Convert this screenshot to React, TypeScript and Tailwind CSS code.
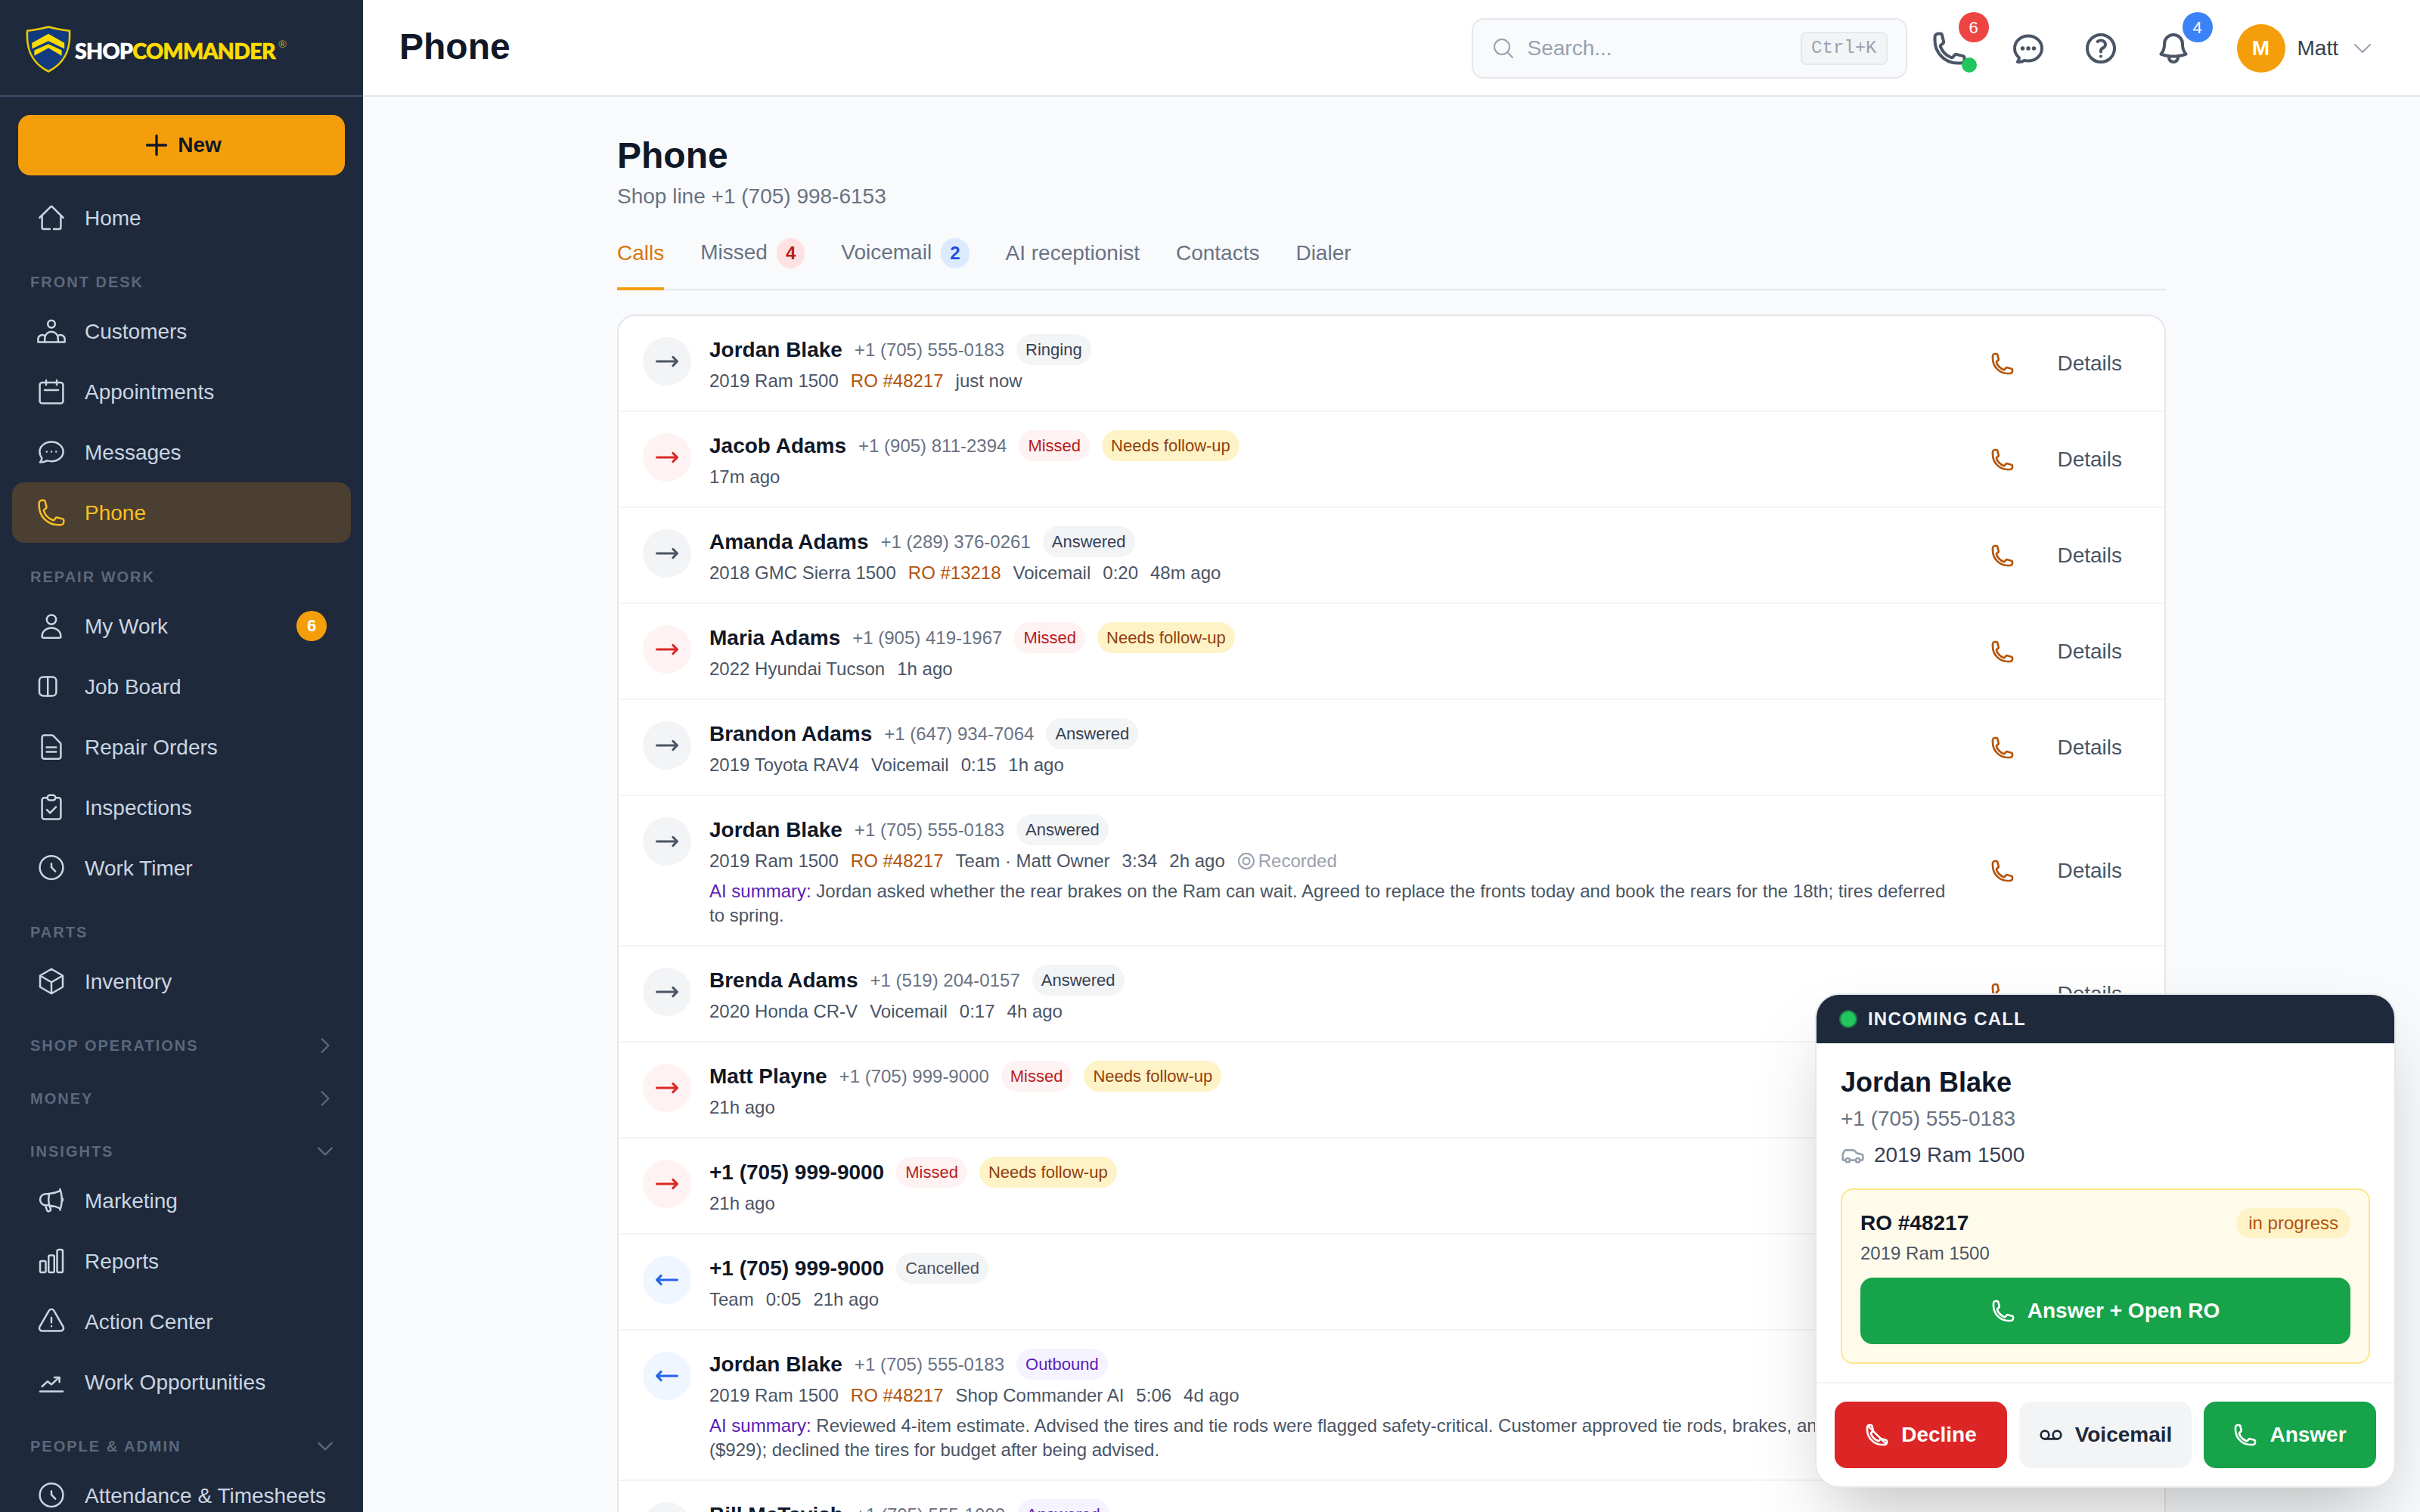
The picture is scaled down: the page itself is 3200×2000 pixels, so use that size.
import {
  HiOutlineArrowLongLeft,
  HiOutlineArrowLongRight,
  HiOutlineBell,
  HiOutlineChartBar,
  HiOutlineChatBubbleOvalLeftEllipsis,
  HiOutlineChevronDown,
  HiOutlineChevronRight,
  HiOutlineCube,
  HiOutlineExclamationTriangle,
  HiOutlineMagnifyingGlass,
  HiOutlineMegaphone,
  HiOutlinePhone,
  HiOutlinePlus,
  HiOutlineQuestionMarkCircle,
} from "react-icons/hi2";
import { Car, Voicemail } from "lucide-react";
import type { ComponentType, ReactNode } from "react";

interface IconProps {
  size?: number;
  className?: string;
}

type IconType = ComponentType<IconProps>;

function Stroke({ size = 20, className, children }: IconProps & { children: ReactNode }) {
  return (
    <svg width={size} height={size} viewBox="0 0 20 20" fill="none" stroke="currentColor" strokeWidth={1.25} strokeLinecap="round" strokeLinejoin="round" className={className}>
      {children}
    </svg>
  );
}

const HomeIcon = (p: IconProps) => (
  <Stroke {...p}>
    <path d="M2.2 10 9.3 2.9a1 1 0 0 1 1.4 0L17.8 10" />
    <path d="M3.8 8.5v8a1 1 0 0 0 1 1H9M11.5 17.5h3.7a1 1 0 0 0 1-1v-8" />
  </Stroke>
);

const CustomersIcon = (p: IconProps) => (
  <Stroke {...p}>
    <circle cx="10" cy="5.3" r="2.4" />
    <path d="M5.6 17.2v-2.4a4.4 4.4 0 0 1 8.8 0v2.4" />
    <path d="M5.7 13.1A2.8 2.8 0 0 0 1.2 15.4v1.8h17.6v-1.8a2.8 2.8 0 0 0-4.5-2.3" />
  </Stroke>
);

const CalendarIcon = (p: IconProps) => (
  <Stroke {...p}>
    <rect x="2.3" y="4" width="15.4" height="13.8" rx="1.6" />
    <path d="M6.5 2.5V5.5M13.5 2.5V5.5M5.5 9h9" />
  </Stroke>
);

const ChatIcon = (p: IconProps) => (
  <Stroke {...p}>
    <path d="M10 3.3c4.3 0 7.8 2.9 7.8 6.4s-3.5 6.4-7.8 6.4c-1 0-2-.2-2.9-.4-1 .6-2.6 1.1-4.6 1.1.7-.8 1.1-1.7 1.2-2.7C2.9 13 2.2 11.4 2.2 9.7c0-3.5 3.5-6.4 7.8-6.4Z" />
    <path d="M6.9 9.8h.01M10 9.8h.01M13.1 9.8h.01" />
  </Stroke>
);

const UserIcon = (p: IconProps) => (
  <Stroke {...p}>
    <circle cx="10" cy="5.8" r="3.1" />
    <path d="M3.8 16.9c0-3.3 2.8-5.7 6.2-5.7s6.2 2.4 6.2 5.7c0 .6-.4 1-1 1H4.8c-.6 0-1-.4-1-1Z" />
  </Stroke>
);

const BoardIcon = (p: IconProps) => (
  <Stroke {...p}>
    <rect x="2" y="3.7" width="11.2" height="12.5" rx="2.5" />
    <path d="M7.6 3.7v12.5" />
  </Stroke>
);

const DocIcon = (p: IconProps) => (
  <Stroke {...p}>
    <path d="M5.3 2.3h4.9c.4 0 .8.2 1.1.4l4.5 4.6c.3.3.4.7.4 1.1v8a1.5 1.5 0 0 1-1.5 1.5h-9.4a1.5 1.5 0 0 1-1.5-1.5V3.8a1.5 1.5 0 0 1 1.5-1.5Z" />
    <path d="M6.8 10.2h6.3M6.8 13.2h6.3" />
  </Stroke>
);

const ClipboardIcon = (p: IconProps) => (
  <Stroke {...p}>
    <path d="M7.3 3.6H5.3a1.5 1.5 0 0 0-1.5 1.5v11.2a1.5 1.5 0 0 0 1.5 1.5h9.4a1.5 1.5 0 0 0 1.5-1.5V5.1a1.5 1.5 0 0 0-1.5-1.5h-2" />
    <rect x="7.3" y="1.9" width="5.4" height="3.4" rx="1.7" />
    <path d="m7 11.6 2.1 2.1 3.9-4" />
  </Stroke>
);

const ClockIcon = (p: IconProps) => (
  <Stroke {...p}>
    <circle cx="10" cy="9.8" r="7.7" />
    <path d="M10 7.2V9.6L12.6 12.3" />
  </Stroke>
);

const TrendIcon = (p: IconProps) => (
  <Stroke {...p}>
    <path d="M2.5 16.2h15" />
    <path d="m3.8 13 3.7-3.4 2.5 2.1 5-4.6" />
    <path d="M12 7h3.3v3" />
  </Stroke>
);

function HangupIcon({ size = 16 }: IconProps) {
  return (
    <svg width={size} height={size} viewBox="0 0 24 24" fill="none" stroke="currentColor" strokeWidth={2} strokeLinecap="round" strokeLinejoin="round">
      <path d="M2.25 6.75c0 8.284 6.716 15 15 15h2.25a2.25 2.25 0 0 0 2.25-2.25v-1.372c0-.516-.351-.966-.852-1.091l-4.423-1.106c-.44-.11-.902.055-1.173.417l-.97 1.293c-.282.376-.769.542-1.21.38a12.035 12.035 0 0 1-7.143-7.143c-.162-.441.004-.928.38-1.21l1.293-.97c.363-.271.527-.734.417-1.173L6.963 3.102a1.125 1.125 0 0 0-1.091-.852H4.5A2.25 2.25 0 0 0 2.25 4.5v2.25Z" />
      <path d="M4 4l16 16" />
    </svg>
  );
}

function RecordIcon() {
  return (
    <svg width={12} height={12} viewBox="0 0 24 24" fill="none" stroke="currentColor" strokeWidth={2} className="text-gray-400">
      <circle cx="12" cy="12" r="10" />
      <circle cx="12" cy="12" r="4.5" />
    </svg>
  );
}

function Logo() {
  return (
    <div className="flex items-center gap-[2.5px] pt-[2px]">
      <svg width={30} height={31} viewBox="0 0 58 60">
        <path d="M29 1.5 C38 4 47 5.5 56 6.5 C57.5 28 52 47 29 58.5 C6 47 .5 28 2 6.5 C11 5.5 20 4 29 1.5Z" fill="#123a80" stroke="#e8c800" strokeWidth={2.6} />
        <path d="M8 22 L29 10.5 L49.5 22 V29.5 L29 19.5 L8 29.5Z" fill="#fbdc00" />
        <path d="M11 31.5 L29 23.5 L46 31.5 V38.5 L29 28.5 L11 38.5Z" fill="#fbdc00" />
      </svg>
      <div className="mt-[2px] flex items-start font-['Lato',sans-serif] text-[14.3px] leading-none font-black tracking-[-0.35px] [-webkit-text-stroke:0.35px_currentColor]">
        <span className="text-white">SHOP</span>
        <span className="text-[#fbdc00]">COMMANDER</span>
        <span className="-mt-[1px] ml-[2px] text-[7px] font-normal text-[#b9a52a] [-webkit-text-stroke:0]">®</span>
      </div>
    </div>
  );
}

function NavItem({ icon: Icon, label, active, badge }: { icon: IconType; label: string; active?: boolean; badge?: string }) {
  return (
    <div className={`mx-2 flex h-10 shrink-0 items-center gap-3 rounded-lg px-4 text-sm ${active ? "bg-[#4a3f30] text-[#fbbf24]" : "text-slate-300"}`}>
      <Icon size={20} className="shrink-0" />
      <span className="flex-1 pt-px">{label}</span>
      {badge && <span className="flex size-5 items-center justify-center rounded-full bg-[#f59e0b] text-[11px] font-bold text-white">{badge}</span>}
    </div>
  );
}

function SectionLabel({ label, chevron }: { label: string; chevron?: "right" | "down" }) {
  return (
    <div className="flex h-[35px] shrink-0 items-center justify-between pt-[10px] pr-[18px] pl-5 text-[10px] font-bold tracking-widest text-[#5b687c] uppercase">
      <span>{label}</span>
      {chevron === "right" && <HiOutlineChevronRight size={14} strokeWidth={2} />}
      {chevron === "down" && <HiOutlineChevronDown size={14} strokeWidth={2} />}
    </div>
  );
}

function Sidebar() {
  return (
    <aside className="flex h-[1000px] w-60 shrink-0 flex-col overflow-hidden bg-[#1e293b]">
      <div className="flex h-16 shrink-0 items-center border-b border-[#3a4f6b] pl-[17px]">
        <Logo />
      </div>
      <div className="shrink-0 px-3 pt-3 pb-2">
        <button className="flex h-10 w-full items-center justify-center gap-1 rounded-lg bg-[#f59e0b] text-sm font-bold text-gray-900">
          <HiOutlinePlus size={20} strokeWidth={2} />
          New
        </button>
      </div>
      <NavItem icon={HomeIcon} label="Home" />
      <SectionLabel label="Front desk" />
      <NavItem icon={CustomersIcon} label="Customers" />
      <NavItem icon={CalendarIcon} label="Appointments" />
      <NavItem icon={ChatIcon} label="Messages" />
      <NavItem icon={HiOutlinePhone} label="Phone" active />
      <SectionLabel label="Repair work" />
      <NavItem icon={UserIcon} label="My Work" badge="6" />
      <NavItem icon={BoardIcon} label="Job Board" />
      <NavItem icon={DocIcon} label="Repair Orders" />
      <NavItem icon={ClipboardIcon} label="Inspections" />
      <NavItem icon={ClockIcon} label="Work Timer" />
      <SectionLabel label="Parts" />
      <NavItem icon={HiOutlineCube} label="Inventory" />
      <SectionLabel label="Shop operations" chevron="right" />
      <SectionLabel label="Money" chevron="right" />
      <SectionLabel label="Insights" chevron="down" />
      <NavItem icon={HiOutlineMegaphone} label="Marketing" />
      <NavItem icon={HiOutlineChartBar} label="Reports" />
      <NavItem icon={HiOutlineExclamationTriangle} label="Action Center" />
      <NavItem icon={TrendIcon} label="Work Opportunities" />
      <SectionLabel label="People & admin" chevron="down" />
      <NavItem icon={ClockIcon} label="Attendance & Timesheets" />
    </aside>
  );
}

function Topbar() {
  return (
    <header className="flex h-16 shrink-0 items-center border-b border-gray-200 bg-white pt-px pr-[30px] pl-6">
      <h1 className="flex-1 pb-[2px] text-2xl font-bold text-gray-900">Phone</h1>
      <div className="flex h-10 w-72 items-center gap-2 rounded-lg border border-gray-200 bg-slate-50 px-3">
        <HiOutlineMagnifyingGlass size={16} className="text-gray-400" />
        <span className="flex-1 text-sm text-gray-400">Search...</span>
        <span className="rounded border border-gray-200 bg-gray-100 px-1.5 py-0.5 font-['Liberation_Mono',monospace] text-xs text-gray-400">Ctrl+K</span>
      </div>
      <div className="relative ml-2 flex size-10 items-center justify-center text-gray-600">
        <HiOutlinePhone size={24} strokeWidth={2} />
        <span className="absolute -top-1 -right-1.5 flex size-5 items-center justify-center rounded-full bg-[#ef4444] text-[11px] text-white">6</span>
        <span className="absolute right-0.5 bottom-1 size-2.5 rounded-full bg-[#22c55e]" />
      </div>
      <div className="ml-3 flex size-10 items-center justify-center text-gray-600">
        <HiOutlineChatBubbleOvalLeftEllipsis size={24} strokeWidth={2} />
      </div>
      <div className="ml-2 flex size-10 items-center justify-center text-gray-600">
        <HiOutlineQuestionMarkCircle size={24} strokeWidth={2} />
      </div>
      <div className="relative ml-2 flex size-10 items-center justify-center text-gray-600">
        <HiOutlineBell size={24} strokeWidth={2} />
        <span className="absolute -top-1 -right-1.5 flex size-5 items-center justify-center rounded-full bg-[#3b82f6] text-[11px] text-white">4</span>
      </div>
      <div className="ml-[22px] flex items-center gap-2">
        <span className="flex size-8 items-center justify-center rounded-full bg-[#f59e0b] text-sm font-bold text-white">M</span>
        <span className="text-sm text-gray-700">Matt</span>
        <HiOutlineChevronDown size={16} className="text-gray-400" />
      </div>
    </header>
  );
}

const pillStyles = {
  gray: "bg-gray-100 text-gray-700",
  cancelled: "bg-gray-100 text-gray-600",
  missed: "bg-[#fef2f2] text-[#b91c1c]",
  follow: "bg-[#fef3c7] text-[#92400e]",
  violet: "bg-[#f5f3ff] text-[#5b21b6]",
};

function Pill({ kind, children }: { kind: keyof typeof pillStyles; children: ReactNode }) {
  return <span className={`rounded-full px-1.5 py-0.5 text-[11px] ${pillStyles[kind]}`}>{children}</span>;
}

interface Call {
  dir: "in" | "missed" | "out";
  name: string;
  phone?: string;
  pills: [keyof typeof pillStyles, string][];
  vehicle?: string;
  ro?: string;
  meta: string[];
  recorded?: boolean;
  summary?: string;
}

const missedPills: Call["pills"] = [
  ["missed", "Missed"],
  ["follow", "Needs follow-up"],
];

const calls: Call[] = [
  { dir: "in", name: "Jordan Blake", phone: "+1 (705) 555-0183", pills: [["gray", "Ringing"]], vehicle: "2019 Ram 1500", ro: "RO #48217", meta: ["just now"] },
  { dir: "missed", name: "Jacob Adams", phone: "+1 (905) 811-2394", pills: missedPills, meta: ["17m ago"] },
  { dir: "in", name: "Amanda Adams", phone: "+1 (289) 376-0261", pills: [["gray", "Answered"]], vehicle: "2018 GMC Sierra 1500", ro: "RO #13218", meta: ["Voicemail", "0:20", "48m ago"] },
  { dir: "missed", name: "Maria Adams", phone: "+1 (905) 419-1967", pills: missedPills, vehicle: "2022 Hyundai Tucson", meta: ["1h ago"] },
  { dir: "in", name: "Brandon Adams", phone: "+1 (647) 934-7064", pills: [["gray", "Answered"]], vehicle: "2019 Toyota RAV4", meta: ["Voicemail", "0:15", "1h ago"] },
  {
    dir: "in",
    name: "Jordan Blake",
    phone: "+1 (705) 555-0183",
    pills: [["gray", "Answered"]],
    vehicle: "2019 Ram 1500",
    ro: "RO #48217",
    meta: ["Team · Matt Owner", "3:34", "2h ago"],
    recorded: true,
    summary: "Jordan asked whether the rear brakes on the Ram can wait. Agreed to replace the fronts today and book the rears for the 18th; tires deferred to spring.",
  },
  { dir: "in", name: "Brenda Adams", phone: "+1 (519) 204-0157", pills: [["gray", "Answered"]], vehicle: "2020 Honda CR-V", meta: ["Voicemail", "0:17", "4h ago"] },
  { dir: "missed", name: "Matt Playne", phone: "+1 (705) 999-9000", pills: missedPills, meta: ["21h ago"] },
  { dir: "missed", name: "+1 (705) 999-9000", pills: missedPills, meta: ["21h ago"] },
  { dir: "out", name: "+1 (705) 999-9000", pills: [["cancelled", "Cancelled"]], meta: ["Team", "0:05", "21h ago"] },
  {
    dir: "out",
    name: "Jordan Blake",
    phone: "+1 (705) 555-0183",
    pills: [["violet", "Outbound"]],
    vehicle: "2019 Ram 1500",
    ro: "RO #48217",
    meta: ["Shop Commander AI", "5:06", "4d ago"],
    summary: "Reviewed 4-item estimate. Advised the tires and tie rods were flagged safety-critical. Customer approved tie rods, brakes, and alignment ($929); declined the tires for budget after being advised.",
  },
  { dir: "in", name: "Bill McTavish", phone: "+1 (705) 555-1000", pills: [["violet", "Answered"]], vehicle: "2017 Ford F-150", meta: ["3:12", "5d ago"] },
];

const dirStyles = {
  in: "bg-gray-100 text-gray-600",
  missed: "bg-[#fef2f2] text-[#dc2626]",
  out: "bg-[#eff6ff] text-[#2563eb]",
};

function CallRow({ call }: { call: Call }) {
  const Arrow = call.dir === "out" ? HiOutlineArrowLongLeft : HiOutlineArrowLongRight;
  return (
    <div className="flex gap-3 border-b border-gray-100 px-4 pt-3 pb-[11.5px]">
      <span className={`mt-0.5 flex size-8 shrink-0 items-center justify-center rounded-full ${dirStyles[call.dir]}`}>
        <Arrow size={18} strokeWidth={2} />
      </span>
      <div className="min-w-0 flex-1">
        <div className="flex items-center gap-2">
          <span className="text-sm font-bold text-gray-900">{call.name}</span>
          {call.phone && <span className="text-xs text-gray-500">{call.phone}</span>}
          {call.pills.map(([kind, text]) => (
            <Pill key={text} kind={kind}>{text}</Pill>
          ))}
        </div>
        <div className="mt-[2.5px] flex items-center gap-2 text-xs text-gray-600">
          {call.vehicle && <span>{call.vehicle}</span>}
          {call.ro && <span className="text-[#b45309]">{call.ro}</span>}
          {call.meta.map((m) => (
            <span key={m}>{m}</span>
          ))}
          {call.recorded && (
            <span className="flex items-center gap-0.5 text-gray-400">
              <RecordIcon />
              Recorded
            </span>
          )}
        </div>
        {call.summary && (
          <p className="mt-1 text-xs text-gray-600">
            <span className="text-[#5b21b6]">AI summary:</span> {call.summary}
          </p>
        )}
      </div>
      <div className="flex shrink-0 items-center gap-2 self-center">
        <span className="p-2 text-[#b45309]">
          <HiOutlinePhone size={16} strokeWidth={2} />
        </span>
        <span className="px-3 py-1.5 text-sm text-gray-600">Details</span>
      </div>
    </div>
  );
}

function Tab({ label, count, tone, active }: { label: string; count?: string; tone?: string; active?: boolean }) {
  return (
    <div className={`-mb-px flex items-center gap-1.5 border-b-2 py-3 text-sm ${active ? "border-[#f59e0b] text-[#d97706]" : "border-transparent text-gray-500"}`}>
      <span className={count ? "mb-px" : ""}>{label}</span>
      {count && <span className={`rounded-full px-1.5 py-0.5 text-xs font-semibold ${tone}`}>{count}</span>}
    </div>
  );
}

function IncomingCall() {
  return (
    <div className="absolute right-4 bottom-4 w-96 overflow-hidden rounded-2xl border border-gray-200 bg-white shadow-2xl">
      <div className="flex items-center gap-2 bg-[#1e293b] px-4 py-2">
        <span className="size-2.5 rounded-full bg-[#22c55e] ring-1 ring-[#22c55e]/50" />
        <span className="text-xs font-bold tracking-wider text-slate-100 uppercase">Incoming call</span>
      </div>
      <div className="px-4 pt-3 pb-3">
        <div className="text-lg font-bold text-gray-900">Jordan Blake</div>
        <div className="text-sm text-gray-500">+1 (705) 555-0183</div>
        <div className="mt-1 flex items-center gap-1.5 text-sm text-gray-700">
          <Car size={16} className="text-gray-400" />
          2019 Ram 1500
        </div>
        <div className="mt-3 rounded-lg border border-[#fde68a] bg-[#fffbeb] p-3">
          <div className="flex items-center justify-between">
            <span className="text-sm font-bold text-gray-900">RO #48217</span>
            <span className="rounded-full bg-[#fef3c7] px-2 py-0.5 text-xs text-[#b45309]">in progress</span>
          </div>
          <div className="mt-0.5 text-xs text-gray-600">2019 Ram 1500</div>
          <button className="mt-2 flex h-11 w-full items-center justify-center gap-2 rounded-lg bg-[#16a34a] text-sm font-bold text-white">
            <HiOutlinePhone size={16} strokeWidth={2} />
            Answer + Open RO
          </button>
        </div>
      </div>
      <div className="grid grid-cols-3 gap-2 border-t border-gray-100 p-3">
        <button className="flex h-11 items-center justify-center gap-2 rounded-lg bg-[#dc2626] text-sm font-bold text-white">
          <HangupIcon size={16} />
          Decline
        </button>
        <button className="flex h-11 items-center justify-center gap-2 rounded-lg bg-gray-100 text-sm font-bold text-gray-800">
          <Voicemail size={16} />
          Voicemail
        </button>
        <button className="flex h-11 items-center justify-center gap-2 rounded-lg bg-[#16a34a] text-sm font-bold text-white">
          <HiOutlinePhone size={16} strokeWidth={2} />
          Answer
        </button>
      </div>
    </div>
  );
}

export default function App() {
  return (
    // the reference is a 1600x1000 layout captured at 2x
    <div className="relative flex h-[1000px] w-[1600px] overflow-hidden bg-slate-50 font-['Liberation_Sans',Arial,sans-serif] [zoom:2]">
      <Sidebar />
      <main className="flex min-w-0 flex-1 flex-col">
        <Topbar />
        <div className="mx-auto w-full max-w-5xl pt-6">
          <h2 className="-mt-px mb-px text-2xl font-bold text-gray-900">Phone</h2>
          <p className="text-sm text-gray-500">Shop line +1 (705) 998-6153</p>
          <div className="mt-[5px] mb-4 flex gap-6 border-b border-gray-200">
            <Tab label="Calls" active />
            <Tab label="Missed" count="4" tone="bg-[#fee2e2] text-[#b91c1c]" />
            <Tab label="Voicemail" count="2" tone="bg-[#dbeafe] text-[#1d4ed8]" />
            <Tab label="AI receptionist" />
            <Tab label="Contacts" />
            <Tab label="Dialer" />
          </div>
          <div className="rounded-xl border border-gray-200 bg-white">
            {calls.map((call, i) => (
              <CallRow key={i} call={call} />
            ))}
          </div>
        </div>
      </main>
      <IncomingCall />
    </div>
  );
}
